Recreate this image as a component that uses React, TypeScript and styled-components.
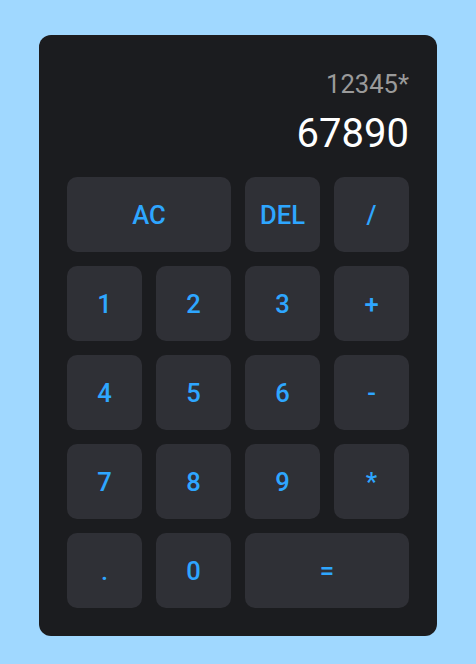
import React from "react";
import styled, { createGlobalStyle } from "styled-components";

const GlobalStyle = createGlobalStyle`
  * { box-sizing: border-box; }
  html, body { margin: 0; padding: 0; }
  body {
    background: #a0d8ff;
    font-family: Roboto, "Liberation Sans", sans-serif;
    min-height: 100vh;
  }
`;

const Page = styled.div`
  display: flex;
  justify-content: center;
  padding-top: 35px;
`;

const Card = styled.div`
  width: 398px;
  background: #1b1c1f;
  border-radius: 12px;
  padding: 28px;
`;

const Display = styled.div`
  display: flex;
  flex-direction: column;
  align-items: flex-end;
  padding: 6px 0 20px;
`;

const Previous = styled.div`
  font-size: 25.6px;
  color: #9a9a9a;
`;

const Current = styled.div`
  font-size: 40px;
  color: #ffffff;
  margin-top: 11px;
`;

const Keys = styled.div`
  display: grid;
  grid-template-columns: repeat(4, 75px);
  grid-auto-rows: 75px;
  gap: 14px;
`;

const Key = styled.button<{ $span?: number }>`
  grid-column: span ${(p) => p.$span ?? 1};
  border: none;
  border-radius: 10px;
  background: #2f3036;
  color: #2ea6ff;
  font-family: Roboto, "Liberation Sans", sans-serif;
  font-size: 25.6px;
  font-weight: 500;
  cursor: pointer;
  padding: 0;
`;

const keys: { label: string; span?: number }[] = [
  { label: "AC", span: 2 },
  { label: "DEL" },
  { label: "/" },
  { label: "1" },
  { label: "2" },
  { label: "3" },
  { label: "+" },
  { label: "4" },
  { label: "5" },
  { label: "6" },
  { label: "-" },
  { label: "7" },
  { label: "8" },
  { label: "9" },
  { label: "*" },
  { label: "." },
  { label: "0" },
  { label: "=", span: 2 },
];

export default function App() {
  return (
    <>
      <GlobalStyle />
      <Page>
        <Card>
          <Display>
            <Previous>12345*</Previous>
            <Current>67890</Current>
          </Display>
          <Keys>
            {keys.map((k) => (
              <Key key={k.label} $span={k.span}>
                {k.label}
              </Key>
            ))}
          </Keys>
        </Card>
      </Page>
    </>
  );
}
